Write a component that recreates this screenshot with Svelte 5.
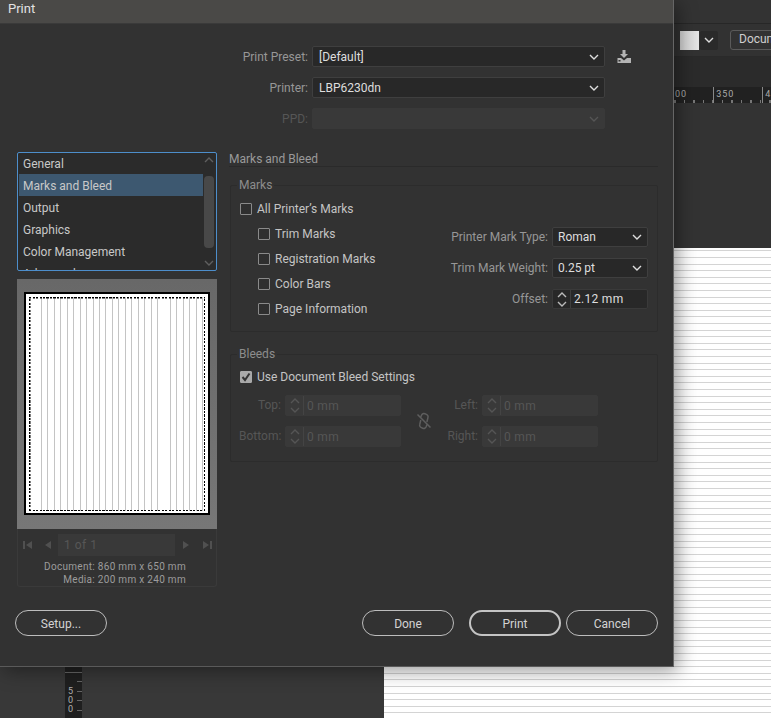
<script lang="ts">
  const sections = ["General", "Marks and Bleed", "Output", "Graphics", "Color Management", "Advanced"];
  const subMarks = ["Trim Marks", "Registration Marks", "Color Bars", "Page Information"];
</script>

{#snippet chevron(up = false)}
  <svg class="chev" width="10" height="6" viewBox="0 0 10 6" class:up>
    <polyline points="1,1 5,5 9,1" fill="none" stroke="currentColor" stroke-width="1.4" />
  </svg>
{/snippet}

{#snippet spinner(value, disabled)}
  <div class="spin" class:disabled>
    <span class="arrows">
      {@render chevron(true)}
      {@render chevron()}
    </span>
    <span class="spin-value">{value}</span>
  </div>
{/snippet}

<div class="app">
  <div class="appbar"></div>
  <div class="toolbar">
    <span class="swatch"></span>
    <span class="swatch-menu">{@render chevron()}</span>
    <span class="doc-btn">Document Setup</span>
  </div>
  <div class="band"></div>
  <div class="hruler">
    <span class="r1">00</span>
    <span class="r2">350</span>
    <span class="r3">40</span>
  </div>
  <div class="workspace">
    <div class="gutter"></div>
    <div class="vruler"><span>5</span><span>0</span><span>0</span></div>
    <div class="paste"></div>
    <div class="canvas"></div>
  </div>

  <div class="dialog">
    <div class="titlebar">Print</div>

    <div class="top-form">
      <span class="lbl">Print Preset:</span>
      <div class="select">[Default]{@render chevron()}</div>
      <svg class="save" width="16" height="14" viewBox="0 0 16 14">
        <path d="M6.500 0h3v4h2.500l-4 4-4-4h2.500z" fill="#b4b4b4" />
        <path d="M2 8h3l3 2.500L11 8h4v5H1.500V8z" fill="#b4b4b4" />
        <rect x="2.500" y="10" width="2" height="1.500" fill="#333" />
      </svg>

      <span class="lbl">Printer:</span>
      <div class="select">LBP6230dn{@render chevron()}</div>
      <span></span>

      <span class="lbl off">PPD:</span>
      <div class="select disabled">{@render chevron()}</div>
      <span></span>
    </div>

    <div class="body">
      <div class="left">
        <div class="listbox">
          <ul>
            {#each sections as s}
              <li class:selected={s === "Marks and Bleed"}>{s}</li>
            {/each}
          </ul>
          <div class="scrollbar">
            {@render chevron(true)}
            <span class="thumb"></span>
            {@render chevron()}
          </div>
        </div>

        <div class="preview-group">
          <div class="preview">
            <div class="page"><div class="bleed"></div></div>
          </div>
          <div class="pager">
            <svg width="10" height="10" viewBox="0 0 10 10"><path d="M0 1h2v8H0zM9 1v8L3 5z" /></svg>
            <svg class="prev" width="6" height="10" viewBox="0 0 6 10"><path d="M6 1v8L0 5z" /></svg>
            <span class="page-field">1 of 1</span>
            <svg class="next" width="6" height="10" viewBox="0 0 6 10"><path d="M0 1v8l6-4z" /></svg>
            <svg class="last" width="10" height="10" viewBox="0 0 10 10"><path d="M8 1h2v8H8zM1 1v8l6-4z" /></svg>
          </div>
          <div class="doc-info">
            <div>Document: 860 mm x 650 mm</div>
            <div>Media: 200 mm x 240 mm</div>
          </div>
        </div>
      </div>

      <div class="right">
        <h2>Marks and Bleed</h2>

        <fieldset class="marks">
          <legend>Marks</legend>
          <div class="marks-row">
            <div class="checks">
              <label class="check"><span class="box"></span>All Printer’s Marks</label>
              {#each subMarks as m}
                <label class="check sub"><span class="box"></span>{m}</label>
              {/each}
            </div>
            <div class="mark-controls">
              <span class="lbl">Printer Mark Type:</span>
              <div class="select">Roman{@render chevron()}</div>
              <span class="lbl">Trim Mark Weight:</span>
              <div class="select">0.25 pt{@render chevron()}</div>
              <span class="lbl">Offset:</span>
              {@render spinner("2.12 mm", false)}
            </div>
          </div>
        </fieldset>

        <fieldset class="bleeds">
          <legend>Bleeds</legend>
          <label class="check">
            <span class="box checked">
              <svg width="10" height="10" viewBox="0 0 10 10">
                <polyline points="1.500,5 4,8 8.500,1.500" fill="none" stroke="#333" stroke-width="2" />
              </svg>
            </span>
            Use Document Bleed Settings
          </label>
          <div class="bleed-grid">
            <div class="bleed-col">
              <span class="lbl off">Top:</span>
              {@render spinner("0 mm", true)}
              <span class="lbl off">Bottom:</span>
              {@render spinner("0 mm", true)}
            </div>
            <svg class="link" width="16" height="18" viewBox="0 0 16 18" fill="none" stroke="#5e5e5e" stroke-width="1.500">
              <path d="M4.500 5.500 5.500 3.200a2.600 2.600 0 0 1 3.400-1.400l1.500.6a2.600 2.600 0 0 1 1.500 3.400l-1 4.200" />
              <path d="M11 12.500 10.200 14.800a2.600 2.600 0 0 1-3.400 1.400l-1.500-.6a2.600 2.600 0 0 1-1.500-3.400l1-4.200" />
              <path d="M1.500 2.500 14.500 15.500" />
            </svg>
            <div class="bleed-col">
              <span class="lbl off">Left:</span>
              {@render spinner("0 mm", true)}
              <span class="lbl off">Right:</span>
              {@render spinner("0 mm", true)}
            </div>
          </div>
        </fieldset>
      </div>
    </div>

    <div class="actions">
      <button>Setup...</button>
      <span class="space"></span>
      <button>Done</button>
      <button class="primary">Print</button>
      <button>Cancel</button>
    </div>
  </div>
</div>

<style>
  :global(body) {
    margin: 0;
    background: #333;
  }

  .app {
    position: relative;
    width: 771px;
    height: 718px;
    overflow: hidden;
    font-family: Roboto, "Open Sans", sans-serif;
    font-size: 12px;
    color: #c4c4c4;
  }

  /* application behind the dialog */
  .appbar {
    height: 23px;
    background: #333;
    border-bottom: 1px solid #272727;
  }

  .toolbar {
    height: 33px;
    box-sizing: border-box;
    display: flex;
    align-items: center;
    padding-left: 680px;
    background: #323232;
    border-bottom: 1px solid #2a2a2a;
  }

  .swatch {
    flex: none;
    width: 19px;
    height: 19px;
    background: linear-gradient(90deg, #d0d0d0, #e6e6e6);
  }

  .swatch-menu {
    flex: none;
    width: 18px;
    height: 19px;
    margin-left: 1px;
    display: flex;
    align-items: center;
    justify-content: center;
    background: #2a2a2a;
    border-radius: 2px;
    color: #ddd;
  }

  .doc-btn {
    flex: none;
    margin-left: 12px;
    padding: 0 8px;
    height: 18px;
    line-height: 17px;
    white-space: nowrap;
    border: 1px solid #5a5a5a;
    border-radius: 3px;
    color: #cfcfcf;
  }

  .band {
    height: 30px;
    background: #2b2b2b;
  }

  .hruler {
    height: 16px;
    background:
      repeating-linear-gradient(90deg, #777 0 1px, transparent 1px 9.500px) 0 100% / 100% 3px no-repeat,
      #212121;
    font-size: 9px;
    line-height: 15px;
    letter-spacing: 1px;
    color: #aaa;
    padding-left: 675px;
    display: flex;
  }

  .r2 {
    margin-left: 26px;
    padding-left: 2px;
    border-left: 1px solid #888;
  }

  .r3 {
    margin-left: 28px;
    padding-left: 2px;
    border-left: 1px solid #888;
  }

  .workspace {
    display: flex;
    height: 616px;
  }

  .gutter {
    width: 65px;
    background: #383838;
  }

  .vruler {
    width: 17px;
    box-sizing: border-box;
    display: flex;
    flex-direction: column;
    justify-content: flex-end;
    padding: 0 0 5px 3px;
    background:
      linear-gradient(#666, #666) 0 calc(100% - 46px) / 100% 1px no-repeat,
      repeating-linear-gradient(0deg, transparent 0 8px, #666 8px 9px, transparent 9px 9.500px) 100% 100% / 5px 100% no-repeat,
      #1f1f1f;
    font-size: 9px;
    line-height: 9px;
    color: #b0b0b0;
  }

  .paste {
    width: 302px;
    background: #383838;
  }

  .canvas {
    flex: 1;
    margin-top: 145px;
    background: repeating-linear-gradient(0deg, #fff 0 5.600px, #d4d4d4 5.600px 6.600px);
  }

  /* dialog */
  .dialog {
    position: absolute;
    left: 0;
    top: 0;
    width: 674px;
    height: 667px;
    box-sizing: border-box;
    background: #323232;
    border-right: 1px solid #666;
    border-bottom: 1px solid #5a5a5a;
    box-shadow: 4px 4px 18px rgba(0, 0, 0, 0.4);
    display: flex;
    flex-direction: column;
  }

  .titlebar {
    height: 24px;
    box-sizing: border-box;
    padding-left: 8px;
    line-height: 17px;
    font-size: 13px;
    color: #e2e2e2;
    background: #4a4947;
    border-bottom: 1px solid #3a3a3a;
  }

  .lbl {
    text-align: right;
    line-height: 20px;
    color: #979797;
    white-space: nowrap;
  }

  .lbl.off {
    color: #565656;
  }

  .select {
    height: 20px;
    box-sizing: border-box;
    display: flex;
    align-items: center;
    justify-content: space-between;
    padding: 0 5px;
    line-height: 18px;
    background: #282828;
    border: 1px solid #3f3f3f;
    border-radius: 2px;
    color: #dedede;
  }

  .select.disabled {
    justify-content: flex-end;
    background: #393939;
    border-color: #393939;
    color: #555;
  }

  .chev {
    display: block;
    flex: none;
  }

  .chev.up {
    transform: scaleY(-1);
  }

  .top-form {
    display: grid;
    grid-template-columns: 108px 293px auto;
    column-gap: 4px;
    row-gap: 10px;
    margin: 22px 0 0 200px;
    align-items: center;
  }

  .top-form .select {
    height: 21px;
    padding-left: 6px;
  }

  .save {
    margin-left: 7px;
  }

  .body {
    display: flex;
    gap: 12px;
    margin: 23px 15px 0 17px;
  }

  .left {
    width: 200px;
  }

  .listbox {
    height: 119px;
    box-sizing: border-box;
    display: flex;
    overflow: hidden;
    padding: 0 1px;
    background: #2b2b2b;
    border: 1px solid #4d8ecb;
    border-radius: 2px;
  }

  ul {
    flex: 1;
    margin: -1px 0 0;
    padding: 0;
    list-style: none;
    overflow: hidden;
    color: #c8c8c8;
  }

  li {
    height: 22px;
    line-height: 24px;
    padding-left: 4px;
  }

  li.selected {
    background: #3d5870;
  }

  .scrollbar {
    width: 12px;
    display: flex;
    flex-direction: column;
    align-items: center;
    justify-content: space-between;
    padding: 4px 0;
    color: #5f5f5f;
  }

  .thumb {
    width: 10px;
    height: 72px;
    border-radius: 4px;
    background: #484848;
  }

  .preview-group {
    margin-top: 8px;
    height: 308px;
    box-sizing: border-box;
    border: 1px solid #3a3a3a;
    border-top: 0;
    border-radius: 0 0 3px 3px;
  }

  .preview {
    height: 250px;
    box-sizing: border-box;
    margin: 0 -1px;
    padding: 13px 7px 14px;
    background: linear-gradient(#686868, #777);
  }

  .page {
    height: 223px;
    box-sizing: border-box;
    padding: 3px 3px 2px;
    background: #fff;
    border: 2px solid #000;
  }

  .bleed {
    height: 100%;
    background:
      repeating-linear-gradient(90deg, #000 0 2px, transparent 2px 3.500px) 0 0 / 100% 1.500px no-repeat,
      repeating-linear-gradient(90deg, #000 0 2px, transparent 2px 3.500px) 0 100% / 100% 1.500px no-repeat,
      repeating-linear-gradient(0deg, #000 0 2px, transparent 2px 3.500px) 0 0 / 1.500px 100% no-repeat,
      repeating-linear-gradient(0deg, #000 0 2px, transparent 2px 3.500px) 100% 0 / 1.500px 100% no-repeat,
      repeating-linear-gradient(90deg, #fff 0 5.500px, #c4c4c4 5.500px 6.450px);
  }

  .pager {
    height: 22px;
    margin-top: 5px;
    display: flex;
    align-items: center;
    padding-left: 5px;
    fill: #505050;
  }

  .prev {
    margin-left: 12px;
  }

  .page-field {
    width: 117px;
    height: 22px;
    box-sizing: border-box;
    margin-left: 7px;
    padding-left: 6px;
    line-height: 23px;
    letter-spacing: 0.5px;
    background: #393939;
    color: #575757;
  }

  .next {
    margin-left: 8px;
  }

  .last {
    margin-left: 13px;
  }

  .doc-info {
    margin-top: 5px;
    padding-right: 30px;
    text-align: right;
    font-size: 10px;
    letter-spacing: 0.3px;
    line-height: 12.500px;
    color: #9c9c9c;
  }

  .right {
    flex: 1;
  }

  h2 {
    margin: 0;
    height: 14px;
    line-height: 15px;
    font-size: 12px;
    font-weight: 400;
    color: #9a9a9a;
    border-bottom: 1px solid #2a2a2a;
  }

  fieldset {
    margin: 11px 0 0 1px;
    padding: 0 9px;
    border: 1px solid #2c2c2c;
    border-radius: 2px;
  }

  legend {
    padding: 0 2px;
    margin-left: -3px;
    line-height: 14px;
    color: #8d8d8d;
  }

  .marks {
    height: 154px;
    box-sizing: border-box;
  }

  .marks-row {
    display: flex;
    justify-content: space-between;
    padding-top: 4px;
  }

  .check {
    display: flex;
    align-items: center;
    gap: 5px;
    height: 25px;
    color: #c4c4c4;
  }

  .check.sub {
    padding-left: 18px;
  }

  .box {
    width: 10px;
    height: 10px;
    flex: none;
    border: 1px solid #8a8a8a;
    border-radius: 1px;
    background: #2f2f2f;
  }

  .box.checked {
    background: #a9a9a9;
    border-color: #a9a9a9;
    display: flex;
    align-items: center;
    justify-content: center;
  }

  .mark-controls {
    display: grid;
    grid-template-columns: auto 96px;
    column-gap: 4px;
    row-gap: 11px;
    align-self: flex-start;
    margin-top: 31px;
  }

  .spin {
    height: 20px;
    box-sizing: border-box;
    display: flex;
    align-items: center;
    background: #282828;
    border: 1px solid #3a3a3a;
    border-radius: 2px;
    color: #dedede;
  }

  .spin.disabled {
    height: 21px;
    background: #393939;
    border-color: #393939;
    color: #565656;
  }

  .arrows {
    width: 17px;
    height: 100%;
    display: flex;
    flex-direction: column;
    align-items: center;
    justify-content: center;
    gap: 3px;
    border-right: 1px solid #3e3e3e;
    color: #bbb;
  }

  .spin.disabled .arrows {
    color: #555;
    border-color: #444;
  }

  .spin-value {
    padding-left: 3px;
    letter-spacing: 0.3px;
  }

  .bleeds {
    height: 115px;
    box-sizing: border-box;
    margin-top: 15px;
  }

  .bleeds .check {
    height: 24px;
    margin-top: 4px;
  }

  .bleed-grid {
    display: flex;
    align-items: center;
    margin-top: 6px;
    margin-left: -1px;
  }

  .bleed-col {
    display: grid;
    grid-template-columns: 42px 116px;
    column-gap: 4px;
    row-gap: 10px;
  }

  .link {
    margin: 0 4px 0 15px;
  }

  .actions {
    display: flex;
    gap: 5px;
    margin: auto 15px 30px;
  }

  .space {
    flex: 1;
  }

  button {
    width: 92px;
    height: 26px;
    padding: 1px 0 0;
    font: inherit;
    color: #d4d4d4;
    background: transparent;
    border: 1px solid #bdbdbd;
    border-radius: 13px;
  }

  button:nth-of-type(2) {
    margin-right: 10px;
  }

  button.primary {
    border: 2px solid #c4c4c4;
  }
</style>
